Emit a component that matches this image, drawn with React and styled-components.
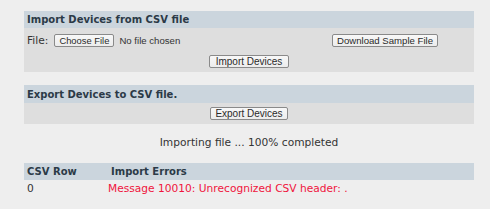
import React from "react";
import styled, { createGlobalStyle } from "styled-components";

const Global = createGlobalStyle`
  html, body { margin: 0; padding: 0; background: #eeeeee; }
  body { font-family: "DejaVu Sans", Verdana, sans-serif; font-size: 10.65px; color: #333; }
`;

const Page = styled.div`
  padding: 11px 16px 0 24px;
  display: flex;
  flex-direction: column;
`;

const Section = styled.section`
  display: flex;
  flex-direction: column;
  margin-bottom: ${(p) => p.$mb || 0}px;
`;

const Header = styled.div`
  background: #cbd5dd;
  height: ${(p) => p.$h || 17}px;
  display: flex;
  align-items: center;
  padding-left: 3px;
  font-weight: bold;
  font-size: 10px;
  color: #2b3a47;
`;

const Body = styled.div`
  background: #dedede;
  display: flex;
  flex-direction: column;
  padding: ${(p) => p.$pad};
`;

const FileRow = styled.div`
  display: flex;
  align-items: center;
  height: 13px;
  padding-left: 3px;
  padding-right: 36px;
`;

const Label = styled.span`
  color: #333;
  margin-right: 6px;
`;

const Button = styled.button`
  font-family: "Liberation Sans", Arial, sans-serif;
  font-size: ${(p) => p.$fs || 10}px;
  color: #2a2a2a;
  height: 13px;
  padding: 0 ${(p) => p.$px || 5}px;
  line-height: 11px;
  border: 1px solid #8a8a8a;
  border-radius: 2px;
  background: linear-gradient(#f8f8f8, #ececec);
  box-sizing: border-box;
  cursor: pointer;
  white-space: nowrap;
`;

const NoFile = styled.span`
  margin-left: 5px;
  font-family: "Liberation Sans", Arial, sans-serif;
  font-size: 9.6px;
  color: #333;
`;

const Spacer = styled.div`
  flex: 1;
`;

const Center = styled.div`
  display: flex;
  justify-content: center;
  margin-top: ${(p) => p.$mt || 0}px;
`;

const Status = styled.div`
  text-align: center;
  color: #333;
  height: 20px;
  line-height: 20px;
  margin-top: 9px;
  margin-bottom: 10px;
`;

const Table = styled.div`
  display: grid;
  grid-template-columns: 84px 1fr;
`;

const Th = styled.div`
  background: #cbd5dd;
  height: 17px;
  display: flex;
  align-items: center;
  padding-left: 3px;
  font-weight: bold;
  font-size: 10px;
  color: #2b3a47;
`;

const Td = styled.div`
  height: 16px;
  display: flex;
  align-items: center;
  padding-left: ${(p) => (p.$error ? 0 : 3)}px;
  color: ${(p) => (p.$error ? "#f0143c" : "#333")};
`;

export default function App() {
  return (
    <>
      <Global />
      <Page>
        <Section $mb={13}>
          <Header $h={17}>Import Devices from CSV file</Header>
          <Body $pad="6px 0 4px 0">
            <FileRow>
              <Label>File:</Label>
              <Button $fs={9.4} $px={4}>Choose File</Button>
              <NoFile>No file chosen</NoFile>
              <Spacer />
              <Button $fs={9.6} $px={4}>Download Sample File</Button>
            </FileRow>
            <Center $mt={8}>
              <Button $px={6}>Import Devices</Button>
            </Center>
          </Body>
        </Section>
        <Section>
          <Header $h={18}>Export Devices to CSV file.</Header>
          <Body $pad="4px 0 4px 0">
            <Center>
              <Button $px={4}>Export Devices</Button>
            </Center>
          </Body>
        </Section>
        <Status>Importing file ... 100% completed</Status>
        <Table>
          <Th>CSV Row</Th>
          <Th>Import Errors</Th>
          <Td>0</Td>
          <Td $error>Message 10010: Unrecognized CSV header: .</Td>
        </Table>
      </Page>
    </>
  );
}
